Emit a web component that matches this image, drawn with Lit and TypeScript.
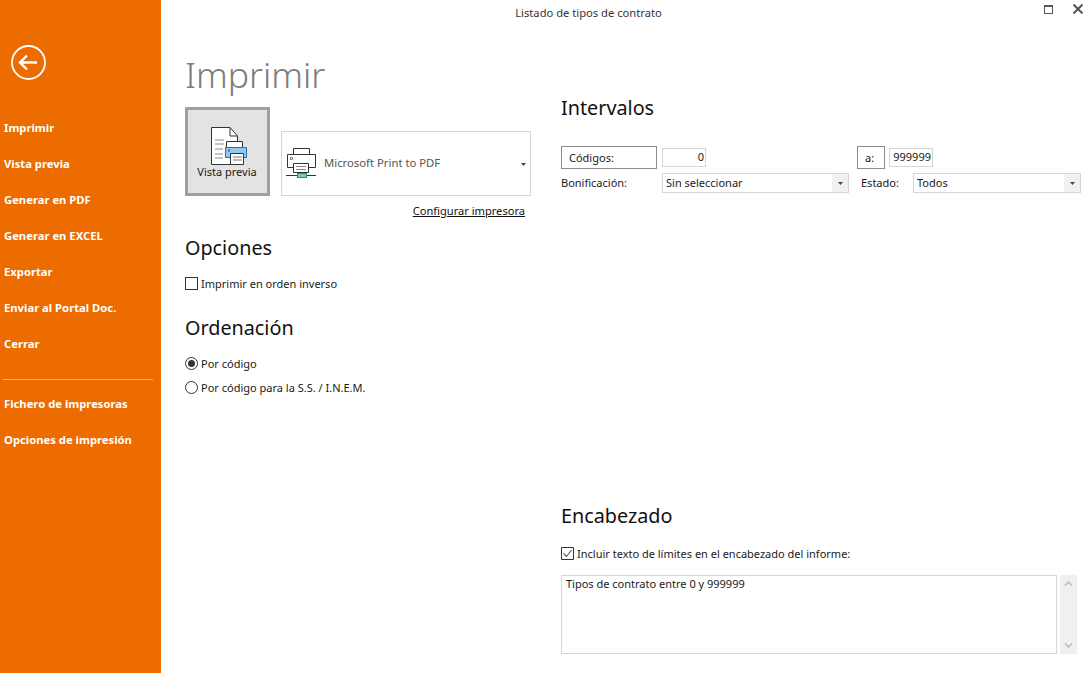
import { LitElement, html, css, svg } from "lit";
import { customElement } from "lit/decorators.js";

const caret = svg`<svg class="caret" width="5" height="3" viewBox="0 0 5 3"><path d="M0 0h5L2.5 3z" fill="#444"/></svg>`;

@customElement("app-root")
export class AppRoot extends LitElement {
  static styles = css`
    :host { display: block; width: 1090px; height: 673px; overflow: hidden; background: #fff;
      font-family: "Noto Sans", "Open Sans", sans-serif; font-size: 11px; color: #1a1a1a; }
    * { box-sizing: border-box; }
    .app { display: flex; height: 673px; }
    .side { width: 161px; flex: none; background: #ed6c00; color: #fff; padding-top: 45px; }
    .back { display: block; margin-left: 11px; margin-bottom: 30px; }
    .item { height: 36px; line-height: 36px; padding-left: 4px; font-weight: 700; font-size: 11.25px; white-space: nowrap; }
    .sep { height: 1px; background: #f6ad73; margin: 17px 8px 6px 3px; }
    .main { flex: 1; display: flex; flex-direction: column; min-width: 0; }
    .top { height: 26px; padding-bottom: 2px; display: flex; align-items: center; position: relative; }
    .ttl { width: 855px; text-align: center; font-size: 11.2px; color: #333; }
    .winb { position: absolute; left: 883px; top: 5px; }
    .winx { position: absolute; left: 912px; top: 4px; }
    .cols { display: flex; flex: 1; }
    .left { width: 400px; padding-left: 24px; flex: none; }
    .right { flex: 1; }
    h1 { margin: 0; font-size: 35.5px; line-height: 48px; height: 50px; margin-top: 24px; font-weight: 300; color: #7d7d7d; }
    h2 { margin: 0; font-size: 19.8px; line-height: 28px; font-weight: 400; color: #111; }
    .print { display: flex; align-items: flex-end; gap: 11px; margin-top: 7px; }
    .pv { width: 85px; height: 89px; background: #e3e3e3; border: 3px solid #a0a0a0; display: flex; flex-direction: column; align-items: center; padding-top: 17px; }
    .pv svg { margin-left: 3px; }
    .pv span { margin-top: -1px; margin-left: -1px; line-height: 15px; }
    .sel { width: 250px; height: 65px; border: 1px solid #d6d6d6; display: flex; align-items: center; padding-left: 3px; position: relative; color: #555; font-size: 11.3px; }
    .sel svg.pr { margin-right: 7px; }
    .sel .lbl { margin-top: -2px; }
    .sel .caret { position: absolute; right: 4px; top: 31px; }
    .link { width: 340px; text-align: right; margin-top: 7px; height: 16px; line-height: 16px; font-size: 11.1px; color: #111; text-decoration: underline; }
    .check { display: flex; align-items: center; gap: 3px; height: 24px; white-space: nowrap; }
    .box { width: 13px; height: 13px; border: 1px solid #333; background: #fff; display: block; flex: none; }
    .radio { width: 13px; height: 13px; flex: none; }
    .opc { margin-top: 15px; }
    .opc + .check { margin-top: 9px; }
    .ord { margin-top: 19px; }
    .ord + .check { margin-top: 9px; }
    .r-head { margin-top: 68px; }
    .row { display: flex; align-items: center; }
    .r1 { margin-top: 24px; height: 23px; }
    .r2 { margin-top: 4px; height: 20px; }
    .lb { border: 1px solid #8c8c8c; height: 23px; line-height: 21px; padding-left: 7px; flex: none; }
    .in { border: 1px solid #d6d6d6; height: 19px; line-height: 15px; text-align: right; width: 44px; padding-right: 1px; flex: none; }
    .combo { border: 1px solid #d6d6d6; height: 20px; line-height: 18px; padding-left: 3px; position: relative; flex: none; }
    .combo i { position: absolute; right: 0; top: 0; bottom: 0; width: 16px; background: #f0f0f0; display: flex; align-items: center; justify-content: center; }
    .cap { line-height: 20px; height: 20px; flex: none; }
    .enc { margin-top: 309px; }
    .enc + .check { margin-top: 11px; }
    .area-wrap { display: flex; gap: 3px; margin-top: 10px; }
    .area { width: 496px; height: 79px; border: 1px solid #d6d6d6; padding: 0 4px; }
    .bar { width: 17px; height: 79px; background: #f0f0f0; display: flex; flex-direction: column; justify-content: space-between; align-items: center; padding: 6px 0; }
  `;

  render() {
    const items = ["Imprimir", "Vista previa", "Generar en PDF", "Generar en EXCEL", "Exportar", "Enviar al Portal Doc.", "Cerrar"];
    const more = ["Fichero de impresoras", "Opciones de impresión"];
    return html`<div class="app">
      <nav class="side">
        <svg class="back" width="35" height="35" viewBox="0 0 35 35" fill="none" stroke="#fff">
          <circle cx="17.5" cy="17.5" r="16.5" stroke-width="1.8"/>
          <path d="M9 17.5H26M16 10.5L9 17.5L16 24.5" stroke-width="2.4"/>
        </svg>
        ${items.map((i) => html`<div class="item">${i}</div>`)}
        <div class="sep"></div>
        ${more.map((i) => html`<div class="item">${i}</div>`)}
      </nav>
      <div class="main">
        <div class="top">
          <div class="ttl">Listado de tipos de contrato</div>
          <svg class="winb" width="9" height="9" viewBox="0 0 9 9"><path d="M0 0h9v9H0z" fill="#555"/><path d="M1 2h7v6H1z" fill="#fff"/></svg>
          <svg class="winx" width="10" height="10" viewBox="0 0 10 10"><path d="M.5 .5L9.5 9.5M9.5 .5L.5 9.5" stroke="#555" stroke-width="2"/></svg>
        </div>
        <div class="cols">
          <section class="left">
            <h1>Imprimir</h1>
            <div class="print">
              <div class="pv">
                <svg width="36" height="38" viewBox="0 0 36 38" fill="none">
                  <path d="M.5.5H19L26.5 9V37.5H.5z" fill="#fff" stroke="#333"/>
                  <path d="M19 .5V9H26.5" stroke="#333"/>
                  <path d="M4 13h9M4 17h9M4 22h8M4 27h8M4 31h8" stroke="#888"/>
                  <path d="M15.5 20V14.5H31.5V20" fill="#fff" stroke="#333"/>
                  <path d="M14.5 20.5H35.5V30.5H14.5z" fill="#92c8ee" stroke="#1f6fb2"/>
                  <rect x="17" y="22.5" width="2" height="2" fill="#1f6fb2"/>
                  <path d="M19.5 26.5H32.5V37.5H19.5z" fill="#fff" stroke="#333"/>
                  <path d="M22 30h9M22 33h9" stroke="#777"/>
                </svg>
                <span>Vista previa</span>
              </div>
              <div class="sel">
                <svg class="pr" width="32" height="32" viewBox="0 0 32 32" fill="none">
                  <path d="M8.5 7V.5H24.5V7" stroke="#333"/>
                  <path d="M2.5 6.5H30.5V19.5H2.5z" fill="#fff" stroke="#333"/>
                  <rect x="5.5" y="9.5" width="2" height="2" stroke="#777" stroke-width=".8"/>
                  <path d="M8.5 15.5H23.5V24.5H8.5z" fill="#fff" stroke="#333"/>
                  <path d="M11 18.5h10M11 21.5h10" stroke="#888"/>
                  <path d="M16.5 25v1" stroke="#5a9"/>
                  <path d="M1 27.5h11M21 27.5h10" stroke="#333"/>
                  <rect x="12.5" y="25.5" width="9" height="4" fill="#7ed09a" stroke="#1f9a50"/>
                </svg>
                <span class="lbl">Microsoft Print to PDF</span> ${caret}
              </div>
            </div>
            <div class="link">Configurar impresora</div>
            <h2 class="opc">Opciones</h2>
            <div class="check"><span class="box"></span>Imprimir en orden inverso</div>
            <h2 class="ord">Ordenación</h2>
            <div class="check">
              <svg class="radio" viewBox="0 0 13 13"><circle cx="6.5" cy="6.5" r="6" fill="#fff" stroke="#333"/><circle cx="6.5" cy="6.5" r="3.5" fill="#333"/></svg>Por código
            </div>
            <div class="check">
              <svg class="radio" viewBox="0 0 13 13"><circle cx="6.5" cy="6.5" r="6" fill="#fff" stroke="#333"/></svg>Por código para la S.S. / I.N.E.M.
            </div>
          </section>
          <section class="right">
            <h2 class="r-head">Intervalos</h2>
            <div class="row r1">
              <div class="lb" style="width:96px">Códigos:</div>
              <div class="in" style="margin-left:5px">0</div>
              <div class="lb" style="width:28px;margin-left:151px">a:</div>
              <div class="in" style="margin-left:4px">999999</div>
            </div>
            <div class="row r2">
              <div class="cap" style="width:101px">Bonificación:</div>
              <div class="combo" style="width:187px">Sin seleccionar<i>${caret}</i></div>
              <div class="cap" style="width:52px;margin-left:12px">Estado:</div>
              <div class="combo" style="width:168px">Todos<i>${caret}</i></div>
            </div>
            <h2 class="enc">Encabezado</h2>
            <div class="check">
              <svg class="radio" viewBox="0 0 13 13"><path d="M.5.5h12v12H.5z" fill="#fff" stroke="#333"/><path d="M2.5 6.5L5.5 9.5L10.5 3" fill="none" stroke="#555" stroke-width="1.1"/></svg>Incluir texto de límites en el encabezado del informe:
            </div>
            <div class="area-wrap">
              <div class="area">Tipos de contrato entre 0 y 999999</div>
              <div class="bar">
                <svg width="9" height="5" viewBox="0 0 9 5"><path d="M1 4.5L4.5 1L8 4.5" fill="none" stroke="#bbb" stroke-width="1.5"/></svg>
                <svg width="9" height="5" viewBox="0 0 9 5"><path d="M1 .5L4.5 4L8 .5" fill="none" stroke="#bbb" stroke-width="1.5"/></svg>
              </div>
            </div>
          </section>
        </div>
      </div>
    </div>`;
  }
}
